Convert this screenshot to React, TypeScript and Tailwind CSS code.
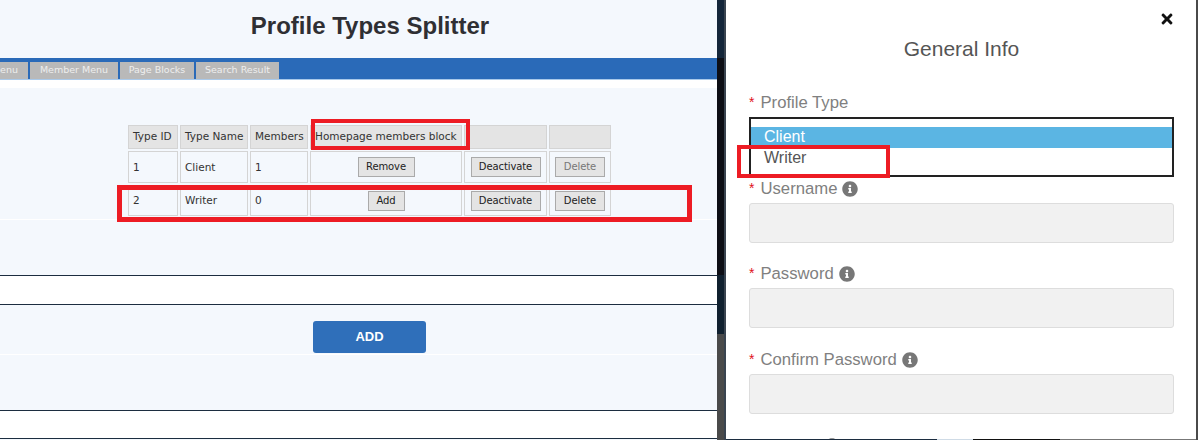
import { FaInfoCircle, FaTimes } from 'react-icons/fa';

const tabs = [
  { label: 'Menu', width: 'w-[28px]', align: 'justify-end pr-[10px]' },
  { label: 'Member Menu', width: 'w-[88px]', align: 'justify-center' },
  { label: 'Page Blocks', width: 'w-[74px]', align: 'justify-center' },
  { label: 'Search Result', width: 'w-[83px]', align: 'justify-center' },
];

const headCell = 'h-[24px] bg-[#e4e4e4] border border-[#d4d4d4] px-[4px] text-left font-normal whitespace-nowrap overflow-visible';
const bodyCell = 'border border-[#d4d4d4] px-[4px]';
const btn = 'h-[20px] border border-[#aaaaaa] bg-[#e4e4e4] text-[#222] text-[10px] tracking-[-0.1px] leading-none align-middle';

function FieldLabel({ text, info }: { text: string; info?: boolean }) {
  return (
    <div className="flex items-center h-[20px] pt-[2px] text-[16.7px] text-[#808080]">
      <span className="text-[#e0101a] text-[14px] mr-[6px] relative top-[-1px]">*</span>
      <span>{text}</span>
      {info && <FaInfoCircle className="ml-[5px] w-[16px] h-[16px] text-[#777]" />}
    </div>
  );
}

function TextField() {
  return <div className="h-[40px] bg-[#f1f1f1] border border-[#dddddd] rounded-[3px]" />;
}

function LeftPane() {
  return (
    <div className="relative w-[717px] h-full bg-[#f4f8fd] shrink-0 flex flex-col font-['Liberation_Sans',sans-serif]">
      <h1 className="h-[58px] pt-[11px] pl-[23px] text-center text-[24px] leading-[30px] font-bold text-[#2f2f33]">
        Profile Types Splitter
      </h1>

      <div className="h-[22px] bg-[#2a6ab8] border-b border-[#a9c9ea] flex items-end gap-[2px] font-['DejaVu_Sans',sans-serif] text-[9.5px] text-[#eeeeee]">
        {tabs.map((tab) => (
          <div key={tab.label} className={`${tab.width} h-[17px] bg-[#b9b9b9] flex items-center overflow-hidden whitespace-nowrap ${tab.align}`}>
            {tab.label}
          </div>
        ))}
      </div>
      <div className="h-[8px] bg-white" />

      <div className="h-[132px] border-b border-white pt-[35px] pl-[126px]">
        <table className="table-fixed w-[487px] border-separate border-spacing-[2px] font-['DejaVu_Sans',sans-serif] text-[10.5px] text-[#333]">
          <thead>
            <tr>
              <th className={`${headCell} w-[50px]`}>Type ID</th>
              <th className={`${headCell} w-[68px]`}>Type Name</th>
              <th className={`${headCell} w-[58px]`}>Members</th>
              <th className={`${headCell} w-[152px]`}>Homepage members block</th>
              <th className={`${headCell} w-[83px]`}></th>
              <th className={`${headCell} w-[62px]`}></th>
            </tr>
          </thead>
          <tbody>
            <tr className="h-[32px]">
              <td className={`${bodyCell} pt-[2px]`}>1</td>
              <td className={`${bodyCell} pt-[2px]`}>Client</td>
              <td className={`${bodyCell} pt-[2px]`}>1</td>
              <td className={`${bodyCell} text-center`}><button className={`${btn} w-[57px]`}>Remove</button></td>
              <td className={`${bodyCell} text-center`}><button className={`${btn} w-[70px]`}>Deactivate</button></td>
              <td className={`${bodyCell} text-center`}><button className={`${btn} w-[50px] bg-[#c4c4c4] text-[#777]`}>Delete</button></td>
            </tr>
            <tr className="h-[31px]">
              <td className={bodyCell}>2</td>
              <td className={bodyCell}>Writer</td>
              <td className={bodyCell}>0</td>
              <td className={`${bodyCell} text-center`}><button className={`${btn} w-[37px]`}>Add</button></td>
              <td className={`${bodyCell} text-center`}><button className={`${btn} w-[70px]`}>Deactivate</button></td>
              <td className={`${bodyCell} text-center`}><button className={`${btn} w-[50px]`}>Delete</button></td>
            </tr>
          </tbody>
        </table>
      </div>

      <div className="h-[56px] border-b border-[#1c2d40]" />
      <div className="h-[29px] bg-white border-b border-[#1c2d40]" />
      <div className="h-[106px] border-b border-[#1c2d40] pt-[16px] flex flex-col">
        <button className="w-[113px] h-[32px] ml-[313px] rounded-[3px] bg-[#2f6fba] text-white text-[13px] font-bold">ADD</button>
        <div className="mt-[1px] h-px bg-white" />
      </div>
      <div className="h-[28px] bg-white border-b border-[#1c2d40]" />

      {/* red annotations drawn on top of the screenshot */}
      <div className="absolute left-[311px] top-[119px] w-[159px] h-[31px] border-[4px] border-[#ed1c24]" />
      <div className="absolute left-[117px] top-[185px] w-[575px] h-[37px] border-[5px] border-[#ed1c24]" />
    </div>
  );
}

function Divider() {
  return (
    <div className="w-[9px] h-full shrink-0 flex flex-col border-r-2 border-[#3a4450]">
      <div className="h-[58px] bg-[#14263a]" />
      <div className="h-[217px] bg-[#0d0e15]" />
      <div className="h-[59px] bg-[#10202f]" />
      <div className="h-[106px] bg-[#4a4a4a]" />
    </div>
  );
}

function Modal() {
  return (
    <div className="relative flex-1 h-full overflow-hidden bg-white pl-[23px] pr-[22px] font-['Liberation_Sans',sans-serif]">
      <FaTimes className="absolute right-[21px] top-[11px] w-[16px] h-[16px] text-[#111]" />
      <h2 className="pt-[37px] h-[92px] text-center text-[21px] leading-[24px] text-[#555]">General Info</h2>

      <FieldLabel text="Profile Type" />
      <div className="mt-[5px] h-[60px] border-2 border-[#222] pt-[8px] text-[16px]">
        <div className="h-[21px] pb-[2px] flex items-center bg-[#5bb5e3] text-white pl-[13px]">Client</div>
        <div className="h-[21px] pb-[2px] flex items-center text-[#555] pl-[13px]">Writer</div>
      </div>

      <div className="mt-[1px]"><FieldLabel text="Username" info /></div>
      <div className="mt-[5px]"><TextField /></div>

      <div className="mt-[20px]"><FieldLabel text="Password" info /></div>
      <div className="mt-[5px]"><TextField /></div>

      <div className="mt-[21px]"><FieldLabel text="Confirm Password" info /></div>
      <div className="mt-[5px]"><TextField /></div>

      <div className="mt-[21px]"><FieldLabel text="Country" info /></div>

      <div className="absolute left-[11px] top-[145px] w-[153px] h-[33px] border-[4px] border-[#ed1c24]" />

      {/* sliver of the page behind the modal, along the bottom edge */}
      <div className="absolute left-0 right-0 bottom-0 h-px flex">
        <div className="w-[211px] bg-[#1c2d40]" />
        <div className="w-[36px] bg-[#cfdbe6]" />
        <div className="w-[87px] bg-[#111111]" />
        <div className="flex-1 bg-[#777777]" />
      </div>
    </div>
  );
}

export default function App() {
  return (
    <div className="w-[1198px] h-[440px] overflow-hidden flex bg-white">
      <LeftPane />
      <Divider />
      <Modal />
      <div className="w-[2px] h-full bg-[#4a4a4a] shrink-0" />
    </div>
  );
}
